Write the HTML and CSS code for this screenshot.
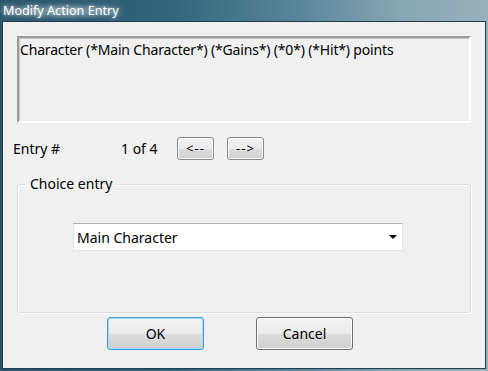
FILE: index.html
```html
<!DOCTYPE html>
<html lang="en">
<head>
    <meta charset="UTF-8">
    <title>Modify Action Entry</title>
    <link rel="stylesheet" href="styles.css">
</head>
<body>
<div class="window">
    <div class="titlebar">
        <span class="title">Modify Action Entry</span>
    </div>
    <div class="client">
        <div class="textbox">Character (*Main Character*) (*Gains*) (*0*) (*Hit*) points</div>

        <div class="entry-row">
            <span class="entry-label">Entry #</span>
            <span class="entry-count">1 of 4</span>
            <button class="btn btn-small">&lt;--</button>
            <button class="btn btn-small">--&gt;</button>
        </div>

        <fieldset class="group">
            <legend>Choice entry</legend>
            <div class="combo">
                <span>Main Character</span>
                <span class="arrow"></span>
            </div>
        </fieldset>

        <div class="actions">
            <button class="btn btn-default">OK</button>
            <button class="btn">Cancel</button>
        </div>
    </div>
</div>
</body>
</html>
```

FILE: styles.css
```css
* {
    box-sizing: border-box;
}
body {
    margin: 0;
    padding: 0;
    width: 488px;
    height: 371px;
    overflow: hidden;
    font-family: 'Noto Sans', 'Open Sans', sans-serif;
    font-size: 14px;
    color: #000;
}
.window {
    width: 488px;
    height: 371px;
    display: flex;
    flex-direction: column;
    padding: 0 2px 2px 2px;
    background: linear-gradient(90deg, #28546a 0%, #33657c 35%, #56849a 60%, #88a6b3 82%, #98b1bc 100%);
}
.titlebar {
    height: 21px;
    display: flex;
    align-items: center;
}
.title {
    color: #fff;
    font-size: 12.6px;
    padding: 0 2px 1px 1px;
    background: radial-gradient(ellipse at center, rgba(255, 255, 255, 0.3) 0%, rgba(255, 255, 255, 0) 70%);
    text-shadow: 0 0 4px rgba(255, 255, 255, 0.75), 0 0 8px rgba(255, 255, 255, 0.5);
}
.client {
    flex: 1;
    border: 1px solid #203d4c;
    background-color: #f0f0f0;
    padding: 14px 0 0 10px;
}
.textbox {
    width: 454px;
    height: 87px;
    margin-left: 4px;
    padding: 3px 1px;
    line-height: 18px;
    letter-spacing: -0.17px;
    border: 2px solid;
    border-color: #9c9c9c #ffffff #ffffff #9c9c9c;
    box-shadow: inset 1px 1px 0 #c8c8c8;
}
.entry-row {
    display: flex;
    align-items: center;
    margin-top: 14px;
    height: 23px;
}
.entry-label {
    width: 108px;
}
.entry-count {
    width: 56px;
}
.btn {
    font-family: inherit;
    font-size: 14px;
    color: #000;
    border: 1px solid #707070;
    border-radius: 3px;
    background: linear-gradient(#f2f2f2 0%, #ebebeb 50%, #dddddd 50%, #cfcfcf 100%);
    box-shadow: inset 0 0 0 1px #fbfbfb;
    padding: 0;
}
.btn-small {
    width: 37px;
    height: 23px;
    margin-right: 13px;
    border-color: #8a8a8a;
    font-size: 13px;
    letter-spacing: 1px;
    line-height: 1;
}
.group {
    width: 454px;
    height: 139px;
    margin: 14px 0 0 4px;
    padding: 0 7px;
    border: 1px solid #d5dfe5;
    border-radius: 3px;
    box-shadow: inset 1px 1px 0 #fff, 1px 1px 0 #fff;
}
.group legend {
    padding: 0 5px;
    line-height: 20px;
}
.combo {
    width: 330px;
    height: 28px;
    margin: 29px 0 0 48px;
    background-color: #fff;
    border: 1px solid;
    border-color: #abadb3 #e3e9ef #e3e9ef #e2e3ea;
    display: flex;
    align-items: center;
    justify-content: space-between;
    padding: 0 4px 0 3px;
}
.arrow {
    width: 0;
    height: 0;
    margin-right: 1px;
    border-left: 4px solid transparent;
    border-right: 4px solid transparent;
    border-top: 4px solid #000;
}
.actions {
    display: flex;
    margin-top: 4px;
    padding-left: 94px;
}
.actions .btn {
    width: 97px;
    height: 33px;
    margin-right: 52px;
}
.btn-default {
    border-color: #3c9fd6;
    box-shadow: inset 0 0 0 1px #9edcf7;
}
```
